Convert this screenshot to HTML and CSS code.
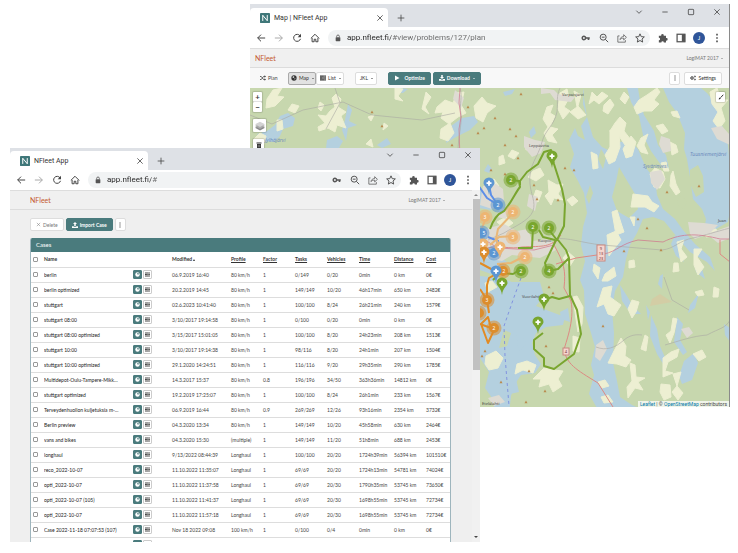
FILE: index.html
```html
<!DOCTYPE html>
<html lang="en">
<head>
<meta charset="utf-8">
<title>NFleet App</title>
<link rel="stylesheet" href="styles.css">
</head>
<body>
<svg class="defs" aria-hidden="true">
  <symbol id="back" viewBox="0 0 12 12"><path d="M11 6H2M6 2L2 6l4 4"/></symbol>
  <symbol id="forward" viewBox="0 0 12 12"><path d="M1 6h9M6 2l4 4-4 4"/></symbol>
  <symbol id="reload" viewBox="0 0 12 12"><path d="M9.600 3.400A4.200 4.200 0 1 0 10.200 7"/><path class="solid" d="M10.800 1v4h-4z"/></symbol>
  <symbol id="home" viewBox="0 0 12 12"><path d="M1 6.500L6 1.500l5 5M2.500 6v4.500H5V7.500h2v3h2.500V6"/></symbol>
  <symbol id="lock" viewBox="0 0 12 12"><path d="M4 5V3.500a2 2 0 0 1 4 0V5"/><rect class="solid" x="2.500" y="4.800" width="7" height="6" rx="1"/></symbol>
  <symbol id="key" viewBox="0 0 12 12"><circle cx="3.500" cy="6" r="2" stroke-width="1.800"/><path d="M5.500 6H10.500M9 6v2.500" stroke-width="2"/></symbol>
  <symbol id="zoomout" viewBox="0 0 12 12"><circle cx="5" cy="5" r="3.600"/><path d="M7.700 7.700L11 11M3.300 5h3.400"/></symbol>
  <symbol id="share" viewBox="0 0 12 12"><path d="M3 3.500H1v7.500h9V8.500M3.500 8C4 5.500 5.500 4.300 8 4.300V2l3.300 3.200L8 8.300V6.200C6 6.200 4.700 6.700 3.500 8z" stroke-width=".9"/></symbol>
  <symbol id="star" viewBox="0 0 12 12"><path d="M6 1l1.500 3.400 3.700.3-2.800 2.500.8 3.700L6 9l-3.200 1.900.8-3.700L.8 4.700l3.700-.3z"/></symbol>
  <symbol id="puzzle" viewBox="0 0 12 12"><path class="solid" d="M1 3.200h2.800a1.600 1.600 0 1 1 3.100 0h2.700V6a1.600 1.600 0 1 1 0 3.100V11.500H7a1.500 1.500 0 0 0-3 0H1V8.700a1.500 1.500 0 0 0 0-3z"/></symbol>
  <symbol id="panel" viewBox="0 0 12 12"><rect x="1.300" y="1.500" width="9.400" height="9" stroke-width="1.500"/><path class="solid" d="M7 1.500h4v9H7z"/></symbol>
  <symbol id="dots" viewBox="0 0 12 12"><path class="solid" d="M5 1h2v2H5zM5 5h2v2H5zM5 9h2v2H5z"/></symbol>
  <symbol id="chevron" viewBox="0 0 12 12"><path d="M2 4l4 4 4-4"/></symbol>
  <symbol id="minimize" viewBox="0 0 12 12"><path d="M2 6h8"/></symbol>
  <symbol id="maximize" viewBox="0 0 12 12"><rect x="2" y="2" width="8" height="8" rx="1"/></symbol>
  <symbol id="close" viewBox="0 0 12 12"><path d="M2 2l8 8M10 2l-8 8"/></symbol>
  <symbol id="plus" viewBox="0 0 12 12"><path d="M6 1v10M1 6h10"/></symbol>
  <symbol id="logo" viewBox="0 0 12 12"><rect width="12" height="12" rx="1" fill="#3f7779" stroke="none"/><path d="M3.300 9.500V2.700l5.400 6.600V2.500" stroke="#fff"/></symbol>
  <symbol id="shuffle" viewBox="0 0 12 12"><path d="M0 3h2.500l4.500 6h3M0 9h2.500l4.500-6h3" stroke-width="1.600"/><path class="solid" d="M9 .5l3 2.500-3 2.500zM9 6.500l3 2.500-3 2.500z"/></symbol>
  <symbol id="globe" viewBox="0 0 12 12"><circle class="solid" cx="6" cy="6" r="5.300"/><path d="M3 3.500l2.500-1L7 4 5.500 5.500H3.500zM7 6.500l2 .5-1.500 2.500z" fill="#fff" stroke="none"/></symbol>
  <symbol id="globelight" viewBox="0 0 12 12"><circle cx="6" cy="6" r="5.300" fill="#fff" stroke="none"/><path d="M6 2.200l3 .8v3H6.500L5 4.500z" fill="#4a7b7d" stroke="none"/></symbol>
  <symbol id="tasks" viewBox="0 0 12 12"><path class="solid" d="M0 1h12v2.600H0zM0 4.700h12v2.600H0zM0 8.400h12V11H0z"/><path d="M7 2.300h4M4 6h7M8.500 9.700H11" stroke="#fff" stroke-width=".7"/></symbol>
  <symbol id="play" viewBox="0 0 12 12"><path class="solid" d="M2 1l9 5-9 5z"/></symbol>
  <symbol id="download" viewBox="0 0 12 12"><path class="solid" d="M4.500 0h3v4H10L6 8 2 4h2.500zM0 8h3.500L6 10l2.500-2H12v3.500H0z"/></symbol>
  <symbol id="upload" viewBox="0 0 12 12"><path class="solid" d="M4.500 8h3V4H10L6 0 2 4h2.500zM0 8.500h3.500V9.500h5v-1H12V12H0z"/></symbol>
  <symbol id="cogs" viewBox="0 0 12 12"><circle cx="4" cy="6" r="2.500" stroke-width="2"/><circle cx="9.800" cy="3" r="1.200" stroke-width="1.400"/><circle cx="9.800" cy="9" r="1.200" stroke-width="1.400"/></symbol>
  <symbol id="layers" viewBox="0 0 12 12"><path d="M6 5l6 3-6 3.500L0 8z" fill="#8b8b8b" stroke="none"/><path d="M6 3l6 3-6 3.500L0 6z" fill="#aaa" stroke="none"/><path d="M6 .8l6 3-6 3.500L0 3.800z" fill="#d3d3d3" stroke="none"/></symbol>
  <symbol id="brush" viewBox="0 0 12 12"><path d="M10.500 1.500L5.500 7" stroke-width="2"/><path class="solid" d="M1.500 11c0-3 1.500-4.500 3.500-4.200C6.300 8.500 4.500 10.500 1.500 11z"/></symbol>
  <symbol id="trash" viewBox="0 0 12 12"><path class="solid" d="M1 1h10v2H1zM2 4h8v8H2z"/><path d="M4.500 5.500v5M7.500 5.500v5" stroke="#fff" stroke-width=".7"/></symbol>
</svg>

<main class="desktop">
  <section class="window window-map" aria-label="Map window">
    <header class="tabstrip">
      <div class="tab"><svg class="icon"><use href="#logo"/></svg><span class="tab-title">Map | NFleet App</span><button class="plain" aria-label="Close tab"><svg class="icon small"><use href="#close"/></svg></button></div>
      <button class="plain newtab" aria-label="New tab"><svg class="icon small"><use href="#plus"/></svg></button>
      <div class="controls">
        <button class="plain" aria-label="Search tabs"><svg class="icon small"><use href="#chevron"/></svg></button>
        <button class="plain" aria-label="Minimize"><svg class="icon small"><use href="#minimize"/></svg></button>
        <button class="plain" aria-label="Maximize"><svg class="icon small"><use href="#maximize"/></svg></button>
        <button class="plain" aria-label="Close"><svg class="icon small"><use href="#close"/></svg></button>
      </div>
    </header>
    <div class="browserbar">
      <button class="plain" aria-label="Back"><svg class="icon"><use href="#back"/></svg></button>
      <button class="plain faint" aria-label="Forward"><svg class="icon"><use href="#forward"/></svg></button>
      <button class="plain" aria-label="Reload"><svg class="icon"><use href="#reload"/></svg></button>
      <button class="plain" aria-label="Home"><svg class="icon"><use href="#home"/></svg></button>
      <div class="address">
        <svg class="icon small"><use href="#lock"/></svg>
        <input type="text" aria-label="Address" value="app.nfleet.fi/#view/problems/127/plan">
        <svg class="icon"><use href="#key"/></svg><svg class="icon"><use href="#zoomout"/></svg><svg class="icon"><use href="#share"/></svg><svg class="icon"><use href="#star"/></svg>
      </div>
      <div class="extras"><svg class="icon"><use href="#puzzle"/></svg><svg class="icon"><use href="#panel"/></svg><button class="avatar" aria-label="Profile J">J</button><svg class="icon"><use href="#dots"/></svg></div>
    </div>
    <nav class="appnav"><a class="brand" href="#">NFleet</a><a class="account" href="#">LogiMAT 2017 <i class="caret"></i></a></nav>
    <div class="toolbar">
      <a class="plan" href="#"><svg class="icon tiny"><use href="#shuffle"/></svg>Plan</a>
      <div class="group"><button class="btn active"><svg class="icon tiny"><use href="#globe"/></svg>Map<i class="caret"></i></button><button class="btn"><svg class="icon tiny"><use href="#tasks"/></svg>List<i class="caret"></i></button></div>
      <button class="btn jkl">JKL<i class="caret"></i></button>
      <div class="actions"><button class="btn primary optimize"><svg class="icon tiny"><use href="#play"/></svg>Optimize</button><button class="btn primary"><svg class="icon tiny"><use href="#download"/></svg>Download<i class="caret"></i></button></div>
      <div class="settings"><button class="btn more" aria-label="More"><svg class="icon tiny"><use href="#dots"/></svg></button><button class="btn"><svg class="icon tiny"><use href="#cogs"/></svg>Settings</button></div>
    </div>
    <div class="map">
      <svg class="tiles" viewBox="250 88 480 319" preserveAspectRatio="xMinYMin slice" role="img" aria-label="Delivery routes map">
        <defs>
          <g id="pin"><path d="M0 8C-1-0-5.500-1-5.500-4a5.500 5.500 0 0 1 11 0C5.500-1 1 0 0 8z"/><path d="M-2.500-3.800h5M0-6.300v5" stroke="#fff" stroke-width="1.800"/></g>
          <g id="cluster"><circle r="7.500" opacity=".55"/><circle r="5"/></g>
          <path id="peak" d="M0-1.500L1.500 1.200h-3z" fill="#b98a4e"/>
        </defs>
        <rect x="250" y="88" width="900" height="700" fill="#c7d7ae"/>
        <g class="water">
          <path d="M663 88l6 14 8 11 8 20-1 16 3 10 3 18 3 22 9 10 4 10-2 11 12-1 12-7 2-12v-43l-2-22-6-20-2-16-13-16-18-15-10-12zM584 88l-1 16 4 13-6 9 4 14-7-4-3-8-6 12 5 14-4 13 8 14 6 12 3 20-4 14-2 18 4 16-5 19 4 10 1 24 6 19 4 14-4 18 3 10-5 19 8 14 15 5 10 3 14 13 13 25h11l-4-19-3-13-6-10-15-7-12-8-3-16-4-18 1-30-2-23 3-19 8-14 3-18 4-14 7-12 6-14 10-2 11 4 13 16 13 15 17 10 8 9-5-14-15-13-12-14-8-11-12-10-6-14-2-16-9-11-8-19-9-9-13 3-6 8-8-4-9-10-6-20-4-25zM627 88l4 14 8 14 4 19 8 16 10 14 8 4-3-14-8-10-4-14-10-16-4-14-2-13z"/>
          <path d="M480 276l20 2 12 4 12 0 16 0 4 14-8 10 13 5 16 6-2 8-17 2-10 6-4 10 3 12 6 9-6 9-14 2-6 9-4 12-2 18h-13l-4-16-7-10 4-16-9-14z"/>
          <path d="M280 116l8-3 7 5-2 8-10 3-3 7-6 6-10-1-7-7 10-3 8-6zM348 104l4 6-3 11 8 4-9 3-2 13-4-11 3-10zM451 126l11-8 12-2 4 6-8 8-14 7-10 6 2-10zM327 140l10-4 6 5-4 7h-13zM400 88l8 1-5 4-8-1zM377 145l10-7 4 6-9 4zM488 164l4 5-3 4-5-2zM503 92l12-3-3 5-7 2zM529 132l5-6 2 7-5 5zM479 190l8 4-2 8 9 1-3 7-12-2z"/>
          <path d="M684 361l10-8 4 10-6 17-10 4-3-8zM677 317l6 7-3 16 7 12-4 3-9-13zM651 315l6 14 3 17 7 16-2 5-8-13-7-18zM620 285l7 11 6 10 8 8-10 0-9-13zM690 305l9-12-4 15-7 5zM724 324l6 4v14l-5-7zM660 276l3-2-1 15-4-5zM646 305l4 7-2 8zM675 235l6 6-3 9 6 12-8-6-5-12zM560 312l8-4 2 14-9-3zM694 260l8 9 3 10-9-7z"/>
          <path d="M480 256l16-2 11 8-6 9-10 3-11-4zM516 335l7 0 3 10-7 6zM507 382l9-3 3 13-9 2z"/>
        </g>
        <g class="land">
          <path d="M619 167l7 12 9 15 3 15-9 9-12-7-5-14 4-15zM690 170l8-5 5 11 1 16-8 5-6-13zM601 149l5 8-3 12-5-10zM590 185l3 8-4 11-3-7zM679 195l8 5-3 10-7-6zM504 330l7 3-4 13-8 2z"/>
        </g>
        <g class="field">
          <path d="M267 99l6-9 9-2-5 8 7 1-9 9-9 2zM292 104l7 2-4 7-7-3zM277 120l5 0 1 9-6 2zM336 94l5 5-3 8 8 5-5 4 5 12-9-3-2 7-7-4-9 3-1-4 7-4-7-8 8 1 4-5 5-4-3-9zM320 102l4 3-3 6-3-3zM437 107l8-7 8 3 4-10 7-1-3 13 5 8-8 4-9 7-8-6 2-6-8 1zM474 106l8-9 5 6 9 3-9 7-4 9-7-4zM368 117l6-2-3 6zM384 123l4 3-5 4zM395 88l8 1-5 7 5 5-8-2zM253 140l7-7 6 3-3 11zM366 144l5-5 2 8zM426 92l5 5-6 10 4 7-7-5zM441 129l9-6 4 10-6 8-8-3z"/>
          <path d="M547 107l6-2-3 8 5 3-5 11 8 2-6 6 5 8-9-2-4-8 4-6-5-8zM560 93l7-4 2 9-5 9 6 4-7 8-5-10zM574 91l7 4-3 11 8 9-8 4-8-7 7-5zM592 92l5 5 5-5 6 4-9 8-5-4-5 4zM604 105l6-6 4 6-6 9-5-3zM615 123l5-6 6 6-2 8 7 9-6 5-6-9-6 3-3-8zM634 107l5-7 8-5 10-7 3 4-6 8 5 4-7 7-8 0-7 3zM656 126l7-2 5 7-6 3zM641 138l7-4-4 11 4 9-7-2-4-6zM624 92l5 5-4 7-5-5zM710 92l7-4 4 12 7 0-7 8 4 13-6 8-6-8 5-9-6-8zM671 112l6-1 3 7-7-2z"/>
          <path d="M610 130l9 3 1 14-5 14-6 3-4-9 5-8zM631 136l5 6-4 14-6 2-3-9zM591 152l6 3 1 13-5 1zM633 194l15 2 4 6 7 4-5 6-9-5-14 0zM650 174l5-6 8 4 2 7-5 9-6-1zM673 171l3 13 4 8-4 3-6-9 1-11zM612 212l5-2 4 13 3 9-8 3zM607 235l9-4 5 9-7 9-5 7zM661 163l5-1 3 9-5 0zM677 242l7-2-3 9 6 8-6 5zM694 249l8 0-5 8 7 10-6 8-4-10zM630 217l5 0-1 9zM706 230l10-1 2 6-12 2zM670 142l6 3 2 7-6 3z"/>
          <path d="M594 264l6 4-2 11-5-8zM605 274l9-7 2 9-8 5-6 0zM603 288l9-2-2 11 11 8-7 11-6-2-4-10-7 3zM632 300l7 2-3 10-4 6-4-9zM621 338l5 8-1 10 6 4-5 7-9-3-9-1 6-12zM673 318l4 1-3 14-4 10-4-8 5-4zM645 335l3 2-2 14-5-2zM630 363l5 2 1 12 9 1-7 4 5 8-8-2-7 10-1-11 5-6zM663 358l8-6 8-3-2 8-9 5-3 9 8 2-10 4zM693 354l9-4 4 7-7 4zM673 374l8-2-4 14 6 7-5 7-6-8 5-6zM661 384l9 1 1 12-7 3-4-8zM629 261l5-1 1 7-6 1zM674 263l4 0 1 8-6 1zM714 287l5 2-1 8-5 0zM695 292l7-2 2 5-6 1zM598 382l7-2 4 6-7 2zM601 397l7-2 5 7-9 1z"/>
          <path d="M548 180l9 5 6-1-5 10 5 6-9-2-3 7-6-9 4-4zM567 200l6-4 5 5-6 5zM573 297l4-1 6 11-1 17-4 8-2-13zM573 336l7 2-1 14-6-1zM544 368l10 2 9 1-5 8 4 7-9 6-4-8-10 3 2-8-8 0 7-7zM517 364l10-3 9 4-3 8-10-3-8 4zM488 182l6-3 5 7-8 4zM533 171l7-3 4 7-8 6-8-4zM499 157l4-2 2 8-6 2zM536 190l6 2-4 10-5-3zM563 258l5-6 7 6-5 8zM512 150l7 3-5 6-6-3zM497 222l9-5 7 6-8 6zM523 239l9 2-2 9-9-3zM485 283l7-2 5 6-9 5zM526 142l6-2 3 7-9 3zM486 356l10-5 7 7-5 10-9 2-4-6z"/>
        </g>
        <g class="town">
          <path d="M541 88l13 2 4 4 17 3-4 5-16-2-5-7-9 1zM524 136l11 4 10 2-4 11-9 4-8-10zM483 186l13-2 7 5 1 12-12 8-12-4zM485 229l19-5 13 7 11-2 4 12 18-2 6 11-16 8-28-3-10 6-17-3zM688 222l16 1 14 2-9 9-14 5-5-5zM707 234l23-8v12l-12 5zM455 90l9 8-3 10-8-9zM529 194l9 3-3 14-8-5zM711 128l11-2 8 9v10l-13-6zM596 345l7-5 4 9-7 12-5-4zM661 136l9 3 1 12-8 2-4-9zM681 329l8-2 4 6-6 5zM650 172l11-2 4 9-8 11-6-7zM500 208l8 2-2 9-9-2zM488 398l11-3 6 7-11 4z"/>
        </g>
        <path d="M652 299l8-5 12 8-22 4zM602 211l7 4M658 238l10 8" fill="#d3cda5"/>
        <g class="minor"><path d="M560 88c-4 9-2 13-3 24-3 14-12 18-15 30-4 16-14 23-12 42 1 11 6 18 3 27-4 10-18 15-29 22l-16 7"/><path d="M555 239c13-2 27 4 47 6l60 5c12-1 18-10 31-12 13-3 22-6 37-10"/><path d="M250 115l22 9 31-14 40-8 29 13 50 5 33-7M335 88l5 15-14 26"/><path d="M460 88c3 9-1 16 1 26 1 12-3 22-3 38"/><path d="M596 347c10 4 19 1 28-7 8-7 17-5 18-5M664 277l8 23 17 10M665 345c14-4 28-9 42-10 13-7 19-7 23-15"/></g>
        <g class="major"><path d="M460 88l-1 15 2 14-2 12 1 30M480 237l18 11 36 2 20-5 4-6"/><path d="M604 254c14-3 16-10 34-14l25 2c20-10 37-8 57-3l10 0"/></g>
        <path class="highway" d="M484 249c14-5 27 1 38-2 21-1 29 1 39-12M554 245c10 18 12 25 10 43l7 13c4 20-6 43-7 49 3 14 11 19 34 33l15 24M604 254l-28 4-20 6M720 240v14l10 8"/>
        <path class="ferry" d="M521 278l-8 22-9 26 1 30 4 50"/>
        <g><use href="#peak" x="372" y="112"/><use href="#peak" x="382" y="126"/><use href="#peak" x="468" y="107"/><use href="#peak" x="478" y="133"/><use href="#peak" x="452" y="145"/><use href="#peak" x="484" y="128"/><use href="#peak" x="495" y="118"/><use href="#peak" x="510" y="129"/><use href="#peak" x="516" y="136"/><use href="#peak" x="505" y="145"/><use href="#peak" x="521" y="94"/><use href="#peak" x="491" y="170"/><use href="#peak" x="505" y="174"/><use href="#peak" x="518" y="158"/><use href="#peak" x="534" y="185"/><use href="#peak" x="537" y="199"/><use href="#peak" x="558" y="200"/><use href="#peak" x="574" y="170"/><use href="#peak" x="565" y="168"/><use href="#peak" x="667" y="192"/><use href="#peak" x="699" y="186"/><use href="#peak" x="638" y="219"/><use href="#peak" x="647" y="228"/><use href="#peak" x="624" y="251"/><use href="#peak" x="661" y="250"/><use href="#peak" x="603" y="326"/><use href="#peak" x="549" y="287"/><use href="#peak" x="553" y="293"/><use href="#peak" x="546" y="346"/><use href="#peak" x="529" y="371"/><use href="#peak" x="545" y="391"/><use href="#peak" x="526" y="402"/><use href="#peak" x="501" y="382"/><use href="#peak" x="485" y="351"/><use href="#peak" x="482" y="356"/></g>
        <g class="place"><text x="562" y="96">Varpaisjärvi</text><text x="529" y="147">Leppävirta</text><text x="538" y="242">Kuopio</text><text x="522" y="298">Vuorilahti</text><text x="482" y="405">Etelälahti</text><text x="718" y="222">Juan</text></g>
        <g class="lake"><text x="265" y="142">Jylhäjärvi</text><text x="643" y="168">Syvärinvesi</text><text x="690" y="156">Tuusniemenjärvi</text></g>
        <g class="sign"><rect x="597" y="245" width="8" height="16"/><text x="601" y="250">9</text><text x="601" y="255">13</text><text x="601" y="260">23</text><rect x="563" y="348" width="6" height="7"/><text x="566" y="353">4</text></g>
        <path class="route blue" d="M478 185l9 13 11 7-7-10-2-10M480 246l14 7 4-12-10-4"/>
        <path class="route amber" d="M480 233l6-15M490 245l9-8 14-1M500 247l-4-8 2-10 16-17M497 264l14-1 14-7"/>
        <path class="route orange" d="M480 289l7 11 0-15 2-7 14-8M480 324l11 4-3-11-7 7 7 19 7-15M480 263l13 7 10 0M487 300l2 13"/>
        <path class="route green" d="M490 229c3-9 7-15 14-18 8-9 11-18 16-24l-1-6-8-1M520 185l0-4 7-9 11-8 6-12 7-2 3 14 8 25 3 15-1 22-7 14-8-10M533 227l-1 21-14 0M539 230l4 7 12 3M556 240l-11 23 3 11M558 240l8 10 3 8 1 37 7 15 4 24-7 20-20 15-10-3 0-8-10-9v-9l9-7M569 258l-11 11-9 2M570 296l-11 3-7-2-8 3M493 280l7-7 13 1 8-5"/>
        <g class="mark-blue"><use href="#cluster" x="498" y="205"/><use href="#cluster" x="482" y="233"/><use href="#cluster" x="494" y="253"/><use href="#pin" x="489" y="187"/></g>
        <g class="mark-amber"><use href="#cluster" x="485" y="217"/><use href="#cluster" x="513" y="212"/><use href="#cluster" x="513" y="237"/><use href="#cluster" x="525" y="257"/><use href="#pin" x="483" y="248"/><use href="#pin" x="500" y="251"/></g>
        <g class="mark-orange"><use href="#cluster" x="487" y="300"/><use href="#cluster" x="494" y="328"/><use href="#cluster" x="479" y="313"/><use href="#cluster" x="503" y="271"/><use href="#pin" x="484" y="256"/></g>
        <g class="mark-green"><use href="#cluster" x="511" y="180"/><use href="#cluster" x="533" y="227"/><use href="#cluster" x="549" y="228"/><use href="#cluster" x="521" y="271"/><use href="#cluster" x="549" y="271"/><use href="#pin" x="552" y="160"/><use href="#pin" x="502" y="287"/><use href="#pin" x="544" y="303"/><use href="#pin" x="538" y="326"/></g>
        <g class="mark-blue"><use href="#pin" x="496" y="275"/></g>
        <g class="count"><text x="498" y="207">2</text><text x="484" y="235">5</text><text x="494" y="255">2</text><text x="485" y="219">3</text><text x="513" y="214">2</text><text x="513" y="239">3</text><text x="525" y="259">2</text><text x="487" y="302">3</text><text x="494" y="330">2</text><text x="504" y="273">2</text><text x="511" y="182">2</text><text x="533" y="229">2</text><text x="549" y="230">2</text><text x="521" y="273">2</text><text x="549" y="273">4</text></g>
      </svg>
      <div class="mapcontrols">
        <div class="zoomer"><button class="mapbtn">+</button><button class="mapbtn">−</button></div>
        <button class="mapbtn layer" aria-label="Layers"><svg class="icon"><use href="#layers"/></svg></button>
        <button class="mapbtn bin" aria-label="Clear"><svg class="icon tiny"><use href="#trash"/></svg></button>
      </div>
      <button class="mapbtn draw" aria-label="Draw"><svg class="icon tiny"><use href="#brush"/></svg></button>
      <div class="attribution"><a href="#">Leaflet</a> | © <a href="#">OpenStreetMap</a> contributors</div>
    </div>
  </section>

  <section class="window window-cases" aria-label="Cases window">
    <header class="tabstrip">
      <div class="tab"><svg class="icon"><use href="#logo"/></svg><span class="tab-title">NFleet App</span><button class="plain" aria-label="Close tab"><svg class="icon small"><use href="#close"/></svg></button></div>
      <button class="plain newtab" aria-label="New tab"><svg class="icon small"><use href="#plus"/></svg></button>
      <div class="controls">
        <button class="plain" aria-label="Search tabs"><svg class="icon small"><use href="#chevron"/></svg></button>
        <button class="plain" aria-label="Minimize"><svg class="icon small"><use href="#minimize"/></svg></button>
        <button class="plain" aria-label="Maximize"><svg class="icon small"><use href="#maximize"/></svg></button>
        <button class="plain" aria-label="Close"><svg class="icon small"><use href="#close"/></svg></button>
      </div>
    </header>
    <div class="browserbar">
      <button class="plain" aria-label="Back"><svg class="icon"><use href="#back"/></svg></button>
      <button class="plain faint" aria-label="Forward"><svg class="icon"><use href="#forward"/></svg></button>
      <button class="plain" aria-label="Reload"><svg class="icon"><use href="#reload"/></svg></button>
      <button class="plain" aria-label="Home"><svg class="icon"><use href="#home"/></svg></button>
      <div class="address">
        <svg class="icon small"><use href="#lock"/></svg>
        <input type="text" aria-label="Address" value="app.nfleet.fi/#">
        <svg class="icon"><use href="#key"/></svg><svg class="icon"><use href="#zoomout"/></svg><svg class="icon"><use href="#share"/></svg><svg class="icon"><use href="#star"/></svg>
      </div>
      <div class="extras"><svg class="icon"><use href="#puzzle"/></svg><svg class="icon"><use href="#panel"/></svg><button class="avatar" aria-label="Profile J">J</button><svg class="icon"><use href="#dots"/></svg></div>
    </div>
    <div class="viewport">
      <div class="page">
        <nav class="appnav"><a class="brand" href="#">NFleet</a><a class="account" href="#">LogiMAT 2017 <i class="caret"></i></a></nav>
        <div class="casebar"><button class="btn muted"><svg class="icon micro"><use href="#close"/></svg>Delete</button><button class="btn primary"><svg class="icon tiny"><use href="#upload"/></svg>Import Case</button><button class="btn more" aria-label="More"><svg class="icon tiny"><use href="#dots"/></svg></button></div>
        <div class="panel">
          <h2>Cases</h2>
          <table>
            <colgroup><col class="c-check"><col><col class="c-open"><col class="c-mod"><col class="c-num"><col class="c-num"><col class="c-num"><col class="c-num"><col class="c-time"><col class="c-num"><col class="c-cost"></colgroup>
            <thead><tr><th><input type="checkbox" aria-label="Select all"></th><th>Name</th><th></th><th>Modified <i class="sort"></i></th><th><u>Profile</u></th><th><u>Factor</u></th><th><u>Tasks</u></th><th><u>Vehicles</u></th><th><u>Time</u></th><th><u>Distance</u></th><th><u>Cost</u></th></tr></thead>
            <tbody id="cases"></tbody>
          </table>
        </div>
      </div>
      <div class="scrollbar" aria-hidden="true"><i class="up"></i><i class="thumb"></i><i class="down"></i></div>
    </div>
  </section>
</main>
<script src="cases.js"></script>
</body>
</html>
```
FILE: cases.js
```js
const cases = [
  ["berlin", "06.9.2019 16:40", "80 km/h", "1", "0/149", "0/20", "0min", "0 km", "0€"],
  ["berlin optimized", "20.2.2019 14:45", "80 km/h", "1", "149/149", "10/20", "46h17min", "650 km", "2482€"],
  ["stuttgart", "02.6.2023 10:41:40", "80 km/h", "1", "100/100", "8/24", "26h21min", "240 km", "1579€"],
  ["stuttgart 08:00", "3/10/2017 19:14:58", "80 km/h", "1", "0/100", "0/20", "0min", "0 km", "0€"],
  ["stuttgart 08:00 optimized", "3/15/2017 15:01:05", "80 km/h", "1", "100/100", "8/20", "24h23min", "208 km", "1513€"],
  ["stuttgart 10:00", "3/10/2017 19:14:38", "80 km/h", "1", "98/116", "8/20", "24h1min", "207 km", "1504€"],
  ["stuttgart 10:00 optimized", "29.1.2020 14:24:51", "80 km/h", "1", "116/116", "9/20", "29h35min", "290 km", "1785€"],
  ["Multidepot-Oulu-Tampere-Mikk...", "14.3.2017 15:37", "80 km/h", "0.8", "196/196", "34/50", "363h36min", "14812 km", "0€"],
  ["stuttgart optimized", "19.2.2019 17:25:07", "80 km/h", "1", "100/100", "8/24", "26h1min", "233 km", "1567€"],
  ["Terveydenhuollon kuljetuksia m-...", "06.9.2019 16:44", "80 km/h", "0.9", "269/269", "12/26", "93h16min", "2354 km", "3732€"],
  ["Berlin preview", "04.3.2020 13:34", "80 km/h", "1", "149/149", "10/20", "45h58min", "630 km", "2464€"],
  ["vans and bikes", "04.3.2020 15:30", "(multiple)", "1", "149/149", "11/20", "51h8min", "688 km", "2453€"],
  ["longhaul", "9/13/2022 08:44:39", "Longhaul", "1", "100/100", "20/20", "1724h39min", "56394 km", "101510€"],
  ["reco_2022-10-07", "11.10.2022 11:35:07", "Longhaul", "1", "69/69", "20/20", "1724h13min", "54781 km", "74024€"],
  ["opti_2022-10-07", "11.10.2022 11:37:58", "Longhaul", "1", "69/69", "20/30", "1790h35min", "53745 km", "73650€"],
  ["opti_2022-10-07 (105)", "11.10.2022 11:41:37", "Longhaul", "1", "69/69", "20/30", "1698h55min", "53745 km", "72734€"],
  ["opti_2022-10-07", "11.10.2022 11:57:18", "Longhaul", "1", "69/69", "20/30", "1698h55min", "53745 km", "72734€"],
  ["Case 2022-11-18 07:07:53 (107)", "Nov 18 2022 09:08", "100 km/h", "1", "0/100", "0/4", "0min", "0 km", "0€"],
  ["Helsinki", "Nov 18 2022 09:11", "100 km/h", "1", "0/100", "0/5", "0min", "0 km", "0€"]
];

document.getElementById("cases").innerHTML = cases.map(([name, ...values]) => `
  <tr>
    <td><input type="checkbox" aria-label="Select ${name}"></td>
    <td class="name">${name}</td>
    <td><div class="open"><button class="mini primary" aria-label="Open map"><svg class="icon micro"><use href="#globelight"/></svg></button><button class="mini" aria-label="Open list"><svg class="icon micro"><use href="#tasks"/></svg></button></div></td>
    ${values.map(value => `<td>${value}</td>`).join("")}
  </tr>`).join("");
```
FILE: styles.css
```css
* { box-sizing: border-box; }

html, body { height: 100%; }

body {
  margin: 0;
  background: #fff;
  font-family: Lato, "Open Sans", sans-serif;
  font-size: 5px;
  color: #444;
}

a { color: inherit; text-decoration: none; }

button, input { font: inherit; color: inherit; margin: 0; }

.defs { position: absolute; width: 0; height: 0; }

.desktop { position: relative; min-height: 100%; overflow: hidden; }

/* Windows */
.window {
  position: absolute;
  display: flex;
  flex-direction: column;
  overflow: hidden;
  background: #f0f0f0;
}

.window-map {
  inset: 4px 8px 146px 250px;
  border-right: 1px solid #8a8a8a;
}

.window-cases { inset: 148px 258px 11px 10px; }

/* Icons */
.icon {
  width: 10px;
  height: 10px;
  flex: none;
  display: block;
  fill: none;
  stroke: currentColor;
  stroke-width: 1.2;
}

.solid { fill: currentColor; stroke: none; }
.small { width: 8px; height: 8px; }
.tiny { width: 6px; height: 6px; }
.micro { width: 5px; height: 5px; }

/* Browser chrome */
.tabstrip {
  display: flex;
  flex: none;
  height: 23px;
  padding-top: 4px;
  background: #dee1e6;
  color: #333;
  font-family: Roboto, "Open Sans", sans-serif;
  font-size: 7px;
}

.window-cases .tabstrip { height: 22px; padding-top: 3px; }

.tab {
  display: flex;
  align-items: center;
  gap: 4px;
  width: 138px;
  padding: 0 4px 0 10px;
  background: #fff;
  border-radius: 4px 4px 0 0;
}

.tab-title { flex: 1; }

.plain {
  display: flex;
  align-items: center;
  padding: 0;
  border: 0;
  background: none;
  color: #444;
}

.newtab { margin-left: 9px; }

.controls {
  display: flex;
  align-items: flex-start;
  gap: 18px;
  margin-left: auto;
  padding-right: 8px;
}

.browserbar {
  display: flex;
  flex: none;
  align-items: center;
  gap: 8px;
  height: 21px;
  padding: 0 7px 0 6px;
  background: #fff;
  color: #555;
}

.window-cases .browserbar { height: 20px; }

.faint { color: #aaa; }

.address {
  display: flex;
  flex: 1;
  align-items: center;
  gap: 8px;
  min-width: 0;
  height: 16px;
  padding: 0 5px 0 6px;
  border-radius: 8px;
  background: #f1f3f4;
}

.address input {
  flex: 1;
  min-width: 0;
  padding: 0;
  border: 0;
  background: linear-gradient(90deg, #222 44px, #666 44px) text;
  color: transparent;
  font-family: Roboto, "Open Sans", sans-serif;
  font-size: 8px;
  line-height: 14px;
}

.address .small { margin-right: -3px; }

.extras { display: flex; align-items: center; gap: 8px; }

.avatar {
  width: 12px;
  height: 12px;
  margin: 0 -1px;
  padding: 0;
  border: 0;
  border-radius: 50%;
  background: #2f5599;
  color: #fff;
  font-size: 6px;
  line-height: 12px;
}

/* Application header */
.appnav {
  display: flex;
  flex: none;
  align-items: center;
  justify-content: space-between;
  height: 20px;
  padding: 0 6px 0 5px;
  border-top: 1px solid #ddd;
  border-bottom: 1px solid #dcdcdc;
  background: #f0f0f0;
}

.window-cases .appnav { padding: 0 27px 0 20px; }

.brand { color: #c4572c; font-size: 7px; }

.account { color: #777; }

.caret {
  display: inline-block;
  margin-left: 1px;
  border: 1px solid transparent;
  border-top-color: currentColor;
  border-bottom-width: 0;
  vertical-align: middle;
}

/* Buttons */
.btn {
  display: flex;
  align-items: center;
  justify-content: center;
  gap: 2px;
  height: 13px;
  padding: 0 5px;
  border: 1px solid #ddd;
  border-radius: 2px;
  background: #fff;
  color: #333;
}

.btn.active { background: #e2e2e2; border-color: #aaa; }
.btn.muted { color: #777; }
.btn.primary { border-color: #4a7b7d; background: #4a7b7d; color: #fff; font-weight: 700; }
.btn.more { width: 11px; padding: 0; }

.toolbar {
  display: flex;
  flex: none;
  align-items: center;
  gap: 11px;
  height: 20px;
  padding: 0 7px 0 10px;
  background: #f8f8f8;
}

.plan { display: flex; align-items: center; gap: 2px; }
.group { display: flex; }
.group .btn { width: 28px; padding: 0; }
.jkl { width: 22px; padding: 0; }
.actions { display: flex; gap: 2px; }
.optimize { gap: 4px; }
.settings { display: flex; gap: 4px; margin-left: auto; }

/* Map */
.map { position: relative; flex: 1; min-height: 0; overflow: hidden; }
.tiles { display: block; width: 100%; height: 100%; }

.water { fill: #b4d0df; }
.land { fill: #c7d7ae; }
.field { fill: #edefd2; stroke: #edefd2; stroke-linejoin: round; }
.town { fill: #dedbd3; }
.minor, .major, .highway, .route, .ferry { fill: none; stroke-linejoin: round; }
.minor { stroke: #aaa9a3; stroke-width: 1; opacity: .6; }
.major { stroke: #d1728b; stroke-width: 1; opacity: .7; }
.highway { stroke: #dd8a83; stroke-width: 1; }
.ferry { stroke: #8193df; stroke-dasharray: 3 3; }
.route { stroke-width: 2; }
.route.green { stroke: #79a52f; }
.route.blue { stroke: #5c8ee8; }
.route.amber { stroke: #e9b777; }
.route.orange { stroke: #e28b24; }
.mark-green { fill: #78a62e; }
.mark-blue { fill: #5c96d2; }
.mark-amber { fill: #edb573; }
.mark-orange { fill: #dc8d2d; }

.place, .lake, .sign, .count {
  font-family: "Noto Sans", sans-serif;
  font-size: 4px;
  fill: #444;
}

.lake { font-size: 5px; fill: #6f8dbd; font-style: italic; }
.count { font-size: 5px; fill: #fff; text-anchor: middle; }
.sign { fill: #733; text-anchor: middle; }
.sign rect { fill: #f5d6cf; stroke: #c98880; stroke-width: 1; }

.mapcontrols {
  position: absolute;
  top: 4px;
  left: 3px;
  display: flex;
  flex-direction: column;
  align-items: flex-start;
  gap: 7px;
}

.mapbtn {
  display: flex;
  align-items: center;
  justify-content: center;
  width: 9px;
  height: 10px;
  padding: 0;
  border: 0;
  border-radius: 1px;
  background: #fff;
  box-shadow: 0 0 1px 1px #0002;
  color: #333;
  font-size: 8px;
  font-weight: 700;
}

.layer { width: 13px; height: 13px; }
.bin { width: 11px; height: 11px; }
.draw { position: absolute; top: 4px; right: 4px; }

.attribution {
  position: absolute;
  right: 0;
  bottom: 0;
  padding: 0 2px;
  background: #fffb;
  font-family: Roboto, "Liberation Sans", sans-serif;
  font-size: 5px;
  line-height: 6px;
}

.attribution a { color: #0078a8; }

/* Cases page */
.viewport { display: flex; flex: 1; min-height: 0; }
.page { flex: 1; min-width: 0; overflow: hidden; background: #efefef; }

.casebar { display: flex; gap: 2px; padding: 8px 20px 7px; }

.panel {
  margin: 0 21px 0 20px;
  border: 1px solid #9eb5bd;
  border-top: 0;
  border-radius: 2px 2px 0 0;
  background: #fff;
  overflow: hidden;
}

.panel h2 {
  margin: 0 -1px;
  padding-left: 6px;
  background: #4a7b7d;
  color: #fff;
  font-size: 6px;
  font-weight: 400;
  line-height: 14px;
}

table { width: 100%; border-collapse: collapse; table-layout: fixed; }

.c-check { width: 13px; }
.c-open { width: 39px; }
.c-mod { width: 59px; }
.c-num { width: 32px; }
.c-time { width: 35px; }
.c-cost { width: 24px; }

th, td {
  height: 15px;
  padding: 0;
  border-bottom: 1px solid #ddd;
  text-align: left;
  vertical-align: middle;
  white-space: nowrap;
  line-height: 8px;
}

th { color: #333; }

.sort {
  display: inline-block;
  border: 1px solid transparent;
  border-top-width: 0;
  border-bottom: 2px solid #333;
  vertical-align: middle;
}

.name { overflow: hidden; text-overflow: ellipsis; color: #222; }

input[type="checkbox"] {
  display: block;
  appearance: none;
  width: 5px;
  height: 5px;
  margin-left: 2px;
  border: 1px solid #999;
  border-radius: 1px;
  background: #fff;
}

.open { display: flex; gap: 1px; }

.mini {
  display: flex;
  align-items: center;
  justify-content: center;
  width: 9px;
  height: 9px;
  padding: 0;
  border: 1px solid #ccc;
  border-radius: 1px;
  background: #fff;
}

.mini.primary { border-color: #4a7b7d; background: #4a7b7d; }

.scrollbar {
  display: flex;
  flex-direction: column;
  align-items: center;
  width: 8px;
  padding: 2px 0;
  background: #f1f1f1;
}

.thumb { width: 7px; height: 49%; margin-top: 3px; background: #c1c1c1; }
.up, .down { border: 2px solid transparent; }
.up { border-bottom-color: #888; }
.down { margin-top: auto; border-top-color: #444; }
```
